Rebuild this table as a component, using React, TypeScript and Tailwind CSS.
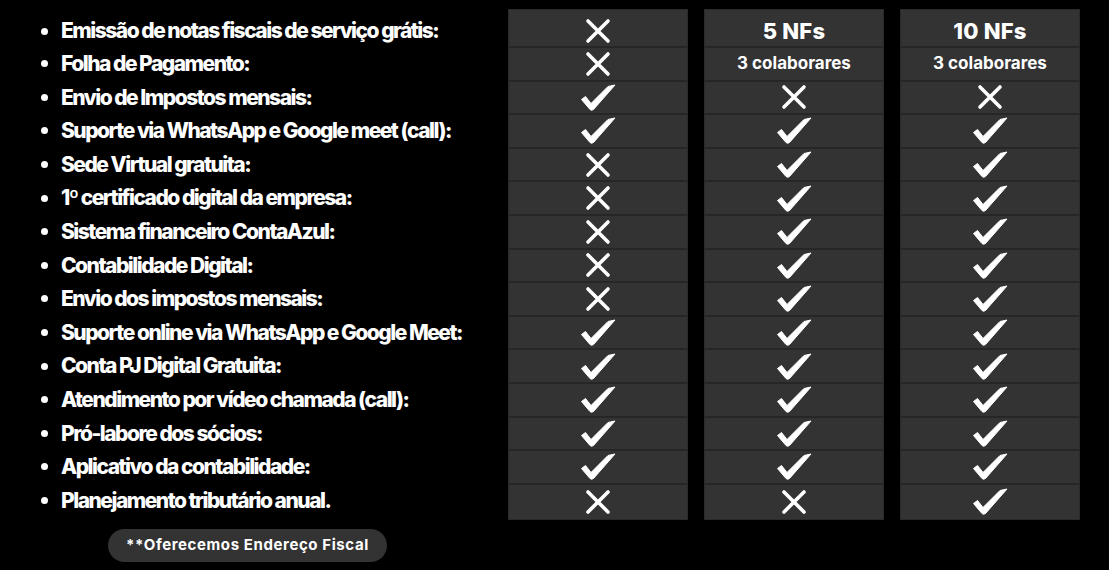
import React from "react";

type V = "x" | "c" | string;

const items = [
  "Emissão de notas fiscais de serviço grátis:",
  "Folha de Pagamento:",
  "Envio de Impostos mensais:",
  "Suporte via WhatsApp e Google meet (call):",
  "Sede Virtual gratuita:",
  "1º certificado digital da empresa:",
  "Sistema financeiro ContaAzul:",
  "Contabilidade Digital:",
  "Envio dos impostos mensais:",
  "Suporte online via WhatsApp e Google Meet:",
  "Conta PJ Digital Gratuita:",
  "Atendimento por vídeo chamada (call):",
  "Pró-labore dos sócios:",
  "Aplicativo da contabilidade:",
  "Planejamento tributário anual.",
];

const cols: V[][] = [
  ["x", "x", "c", "c", "x", "x", "x", "x", "x", "c", "c", "c", "c", "c", "x"],
  ["5 NFs", "3 colaborares", "x", "c", "c", "c", "c", "c", "c", "c", "c", "c", "c", "c", "x"],
  ["10 NFs", "3 colaborares", "x", "c", "c", "c", "c", "c", "c", "c", "c", "c", "c", "c", "c"],
];

const font = { fontFamily: "Inter, 'Open Sans', sans-serif" };

function XIcon() {
  return (
    <svg width="26" height="26" viewBox="0 0 26 26">
      <path d="M3 3 L23 23 M23 3 L3 23" stroke="white" strokeWidth="3.6" strokeLinecap="round" fill="none" />
    </svg>
  );
}

function Check() {
  return (
    <svg width="36" height="27" viewBox="0 0 36 27">
      <path
        d="M1.5 15.5 L5.5 12.5 L11 19.5 L28 2.5 L35 1 L13.5 25.5 Q11.5 27 10 25.5 Z"
        fill="white"
        stroke="white"
        strokeWidth="1"
        strokeLinejoin="round"
      />
    </svg>
  );
}

function rowH(i: number) {
  if (i === 0) return "h-[38px] pt-[6px]";
  if (i === 14) return "h-[34px]";
  return "h-[33.6px]";
}

function Cell({ v, i }: { v: V; i: number }) {
  let content: React.ReactNode;
  if (v === "x") content = <XIcon />;
  else if (v === "c") content = <Check />;
  else if (i === 0)
    content = <span className="text-[22px] font-extrabold text-white tracking-[0.2px]">{v}</span>;
  else content = <span className="text-[17px] font-bold text-white">{v}</span>;
  return (
    <div
      className={`${rowH(i)} flex items-center justify-center ${i < 14 ? "border-b-2 border-[#262626]" : ""}`}
    >
      {content}
    </div>
  );
}

export default function App() {
  return (
    <div className="w-[1109px] h-[570px] bg-black overflow-hidden" style={font}>
      <div className="flex pt-[9px]">
        <div className="w-[508px] flex flex-col">
          {items.map((t, i) => (
            <div key={i} className={`${rowH(i)} flex items-center`}>
              <span className="ml-[41px] w-[7px] h-[7px] rounded-full bg-white shrink-0" />
              <span className="ml-[13px] text-white font-extrabold text-[21px] tracking-[-1.5px] whitespace-nowrap">
                {t}
              </span>
            </div>
          ))}
        </div>
        <div className="flex gap-[16px]">
          {cols.map((c, ci) => (
            <div key={ci} className="w-[180px] bg-[#333333] flex flex-col border border-[#2a2a2a]">
              {c.map((v, i) => (
                <Cell key={i} v={v} i={i} />
              ))}
            </div>
          ))}
        </div>
      </div>
      <div className="mt-[9px] ml-[108px] w-[279px] h-[33px] rounded-full bg-[#333333] flex items-center justify-center">
        <span className="text-white font-bold text-[15px] tracking-[0.6px]">**Oferecemos Endereço Fiscal</span>
      </div>
    </div>
  );
}
